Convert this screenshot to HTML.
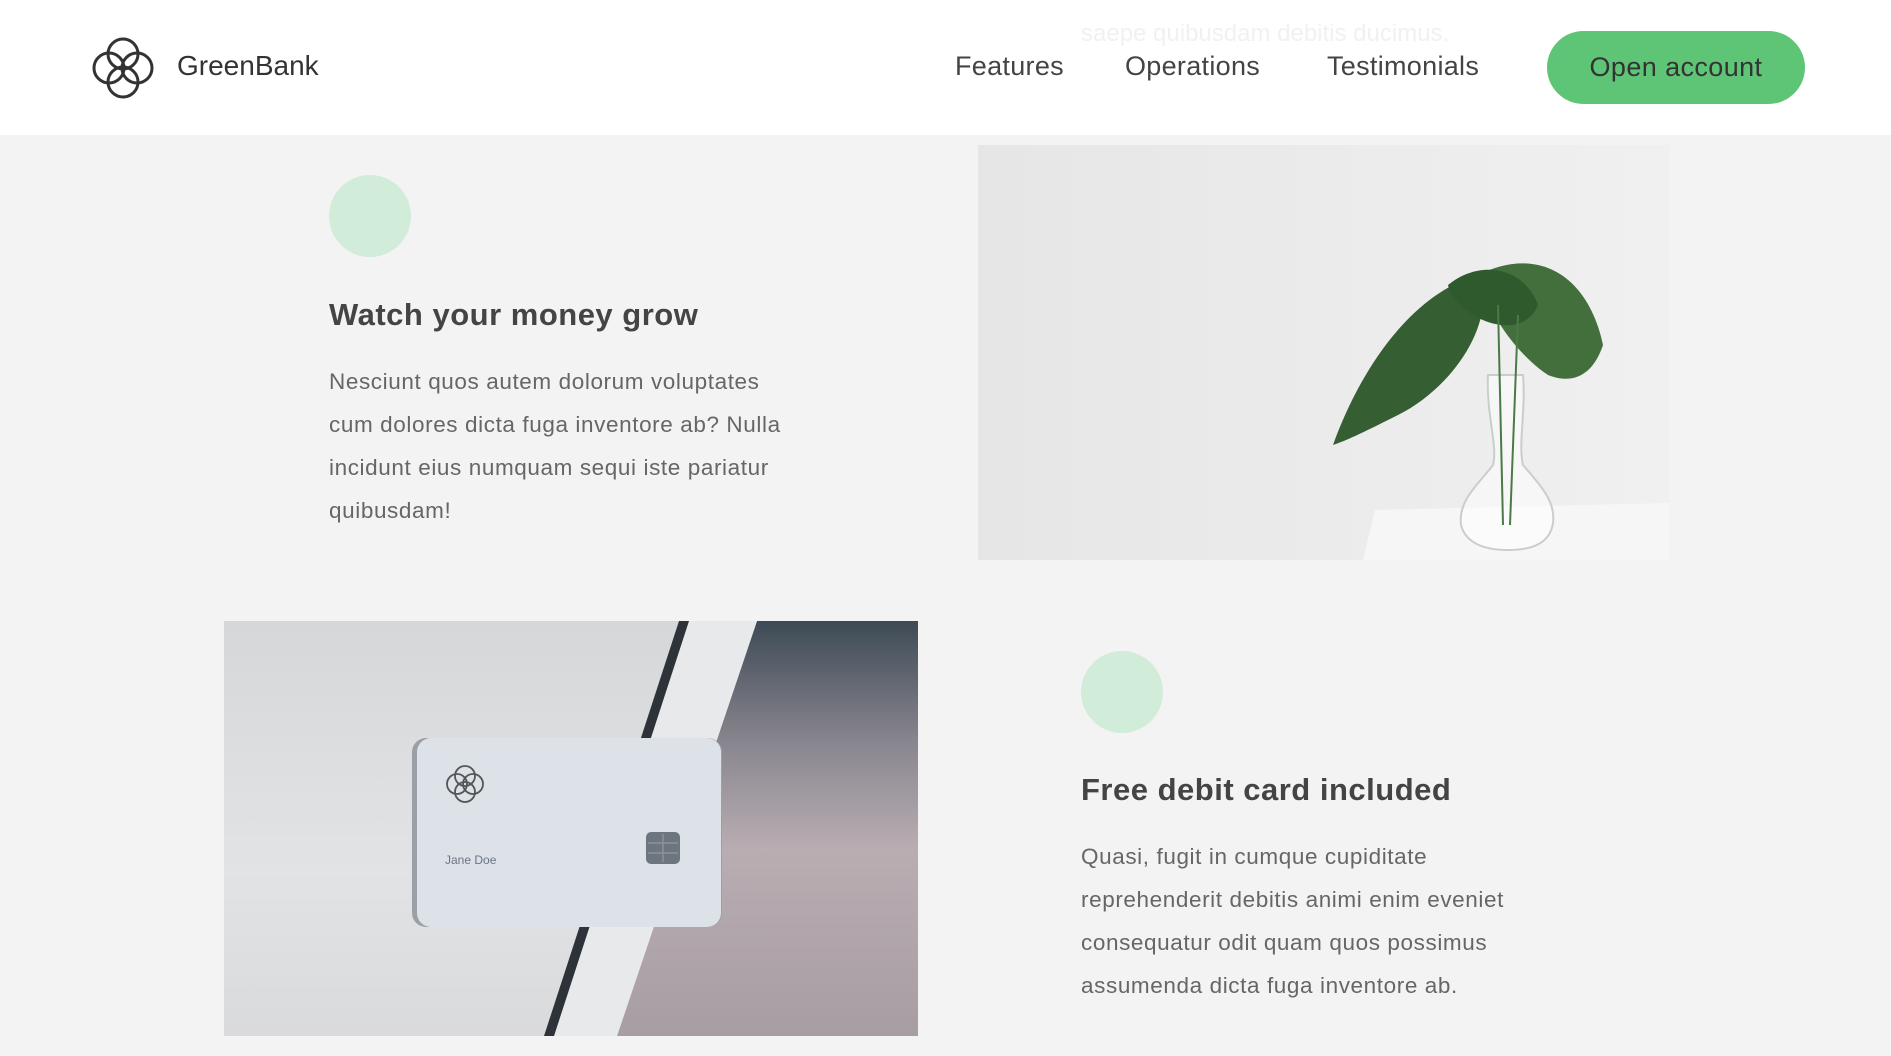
<!DOCTYPE html>
<html><head><meta charset="utf-8"><style>
*{margin:0;padding:0;box-sizing:border-box}
body{width:1891px;height:1056px;background:#f3f3f3;font-family:"Liberation Sans",sans-serif;position:relative;overflow:hidden;color:#444}
.header{position:absolute;left:0;top:0;width:1891px;height:135px;background:rgba(255,255,255,0.97)}
.faint{position:absolute;left:1081px;top:20px;font-size:24px;color:#f1f1f1}
.logo{position:absolute;left:88px;top:33px}
.brand{position:absolute;left:177px;top:50px;font-size:28px;color:#333}
.nav{position:absolute;top:51px;font-size:27px;color:#444;letter-spacing:0.3px}
.btn{position:absolute;left:1547px;top:31px;width:258px;height:73px;border-radius:37px;background:#5ec576;font-size:27px;color:#333;text-align:center;line-height:73px;letter-spacing:0.4px}
.circle{position:absolute;width:82px;height:82px;border-radius:50%;background:#d1ecd8}
h3{position:absolute;font-size:31px;font-weight:bold;color:#444;letter-spacing:0.5px}
p{position:absolute;font-size:22.5px;line-height:43px;color:#666;letter-spacing:0.6px}
.img{position:absolute;overflow:hidden}
</style></head><body>
<div class="header">
<div class="faint">saepe quibusdam debitis ducimus.</div>
<svg class="logo" width="70" height="70" viewBox="0 0 70 70" fill="none" stroke="#333" stroke-width="3">
<circle cx="35" cy="21" r="15"/><circle cx="35" cy="49" r="15"/><circle cx="21" cy="35" r="15"/><circle cx="49" cy="35" r="15"/></svg>
<div class="brand">GreenBank</div>
<div class="nav" style="left:955px">Features</div>
<div class="nav" style="left:1125px">Operations</div>
<div class="nav" style="left:1327px">Testimonials</div>
<div class="btn">Open account</div>
</div>

<div class="circle" style="left:329px;top:175px"></div>
<h3 style="left:329px;top:297px">Watch your money grow</h3>
<p style="left:329px;top:360px">Nesciunt quos autem dolorum voluptates<br>cum dolores dicta fuga inventore ab? Nulla<br>incidunt eius numquam sequi iste pariatur<br>quibusdam!</p>

<div class="img" style="left:978px;top:145px;width:691px;height:415px;background:linear-gradient(90deg,#e6e6e6,#ececec 60%,#f0f0f0)">
<svg width="691" height="415" viewBox="0 0 691 415">
<polygon points="397,365 691,358 691,415 385,415" fill="#f6f6f6"/>
<path d="M355,300 C380,230 430,150 500,130 C520,170 480,240 420,270 C390,285 370,295 355,300Z" fill="#355f33"/>
<path d="M500,130 C560,100 610,130 625,200 C615,230 595,240 570,230 C540,210 510,170 500,130Z" fill="#426f3c"/>
<path d="M470,140 C500,115 545,120 560,160 C550,185 520,185 495,170 C480,160 472,150 470,140Z" fill="#2f5a2e"/>
<path d="M510,230 C508,270 520,300 515,320 C500,340 480,355 483,380 C488,400 510,405 530,405 C555,405 572,398 575,378 C578,355 560,338 545,320 C540,300 548,265 545,230Z" fill="rgba(255,255,255,0.5)" stroke="#c8cfc8" stroke-width="2"/>
<path d="M520,160 L525,380 M540,170 L532,380" stroke="#4a7a45" stroke-width="2"/>
</svg></div>

<div class="img" style="left:224px;top:621px;width:694px;height:415px;background:linear-gradient(180deg,#d6d7d9,#e2e3e5 60%,#d9dadc)">
<svg width="694" height="415" viewBox="0 0 694 415">
<defs><linearGradient id="g" x1="0" y1="0" x2="0" y2="1"><stop offset="0" stop-color="#3e4a55"/><stop offset="0.3" stop-color="#8a8790"/><stop offset="0.55" stop-color="#b9adb2"/><stop offset="1" stop-color="#a79da3"/></linearGradient></defs>
<polygon points="533,0 694,0 694,415 393,415" fill="url(#g)"/>
<polygon points="462,0 533,0 393,415 330,415" fill="#e8e9ea"/>
<polygon points="455,0 465,0 330,415 320,415" fill="#2d3338"/>
<rect x="188" y="117" width="310" height="189" rx="14" fill="#9aa0a6"/>
<rect x="193" y="117" width="304" height="189" rx="14" fill="#dde2e9"/>
<g fill="none" stroke="#555" stroke-width="1.8"><circle cx="241" cy="155" r="10"/><circle cx="241" cy="171" r="10"/><circle cx="233" cy="163" r="10"/><circle cx="249" cy="163" r="10"/></g>
<text x="221" y="243" font-family="Liberation Sans" font-size="12" fill="#6a7484">Jane Doe</text>
<rect x="422" y="211" width="34" height="32" rx="5" fill="#6d757e"/>
<path d="M439,213 V241 M424,222 H454 M424,232 H454" stroke="#8a929a" stroke-width="1.5"/>
</svg></div>

<div class="circle" style="left:1081px;top:651px"></div>
<h3 style="left:1081px;top:772px">Free debit card included</h3>
<p style="left:1081px;top:835px">Quasi, fugit in cumque cupiditate<br>reprehenderit debitis animi enim eveniet<br>consequatur odit quam quos possimus<br>assumenda dicta fuga inventore ab.</p>
</body></html>
